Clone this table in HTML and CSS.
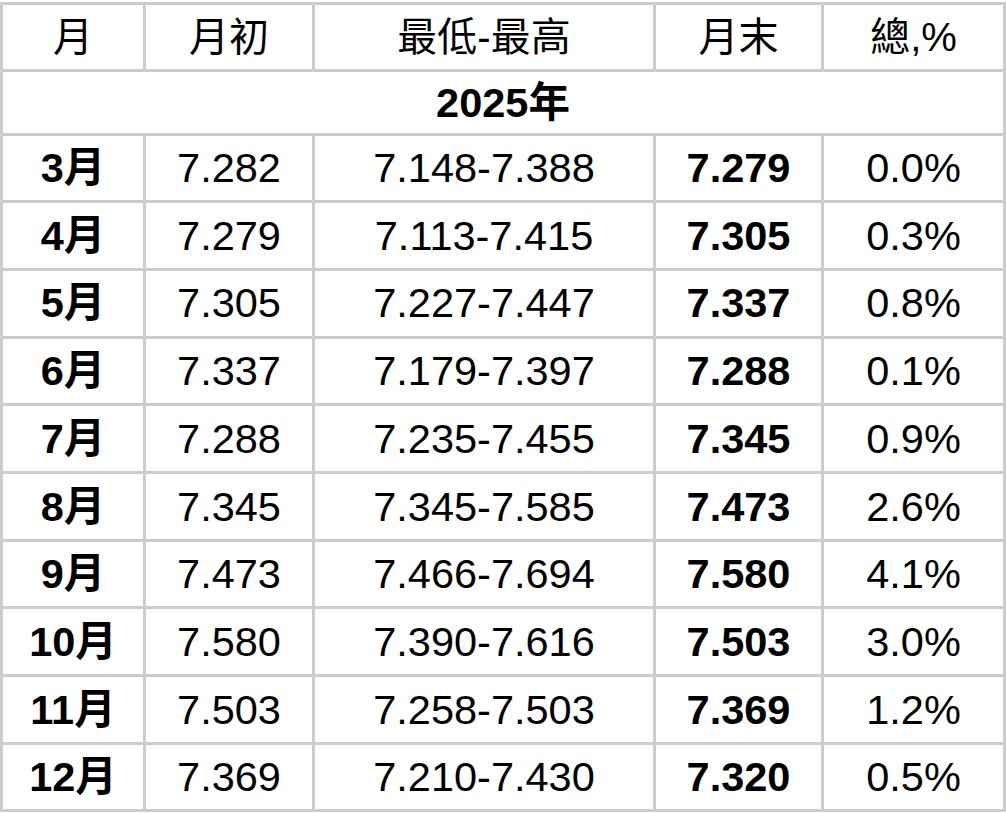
FILE: index.html
```html
<!DOCTYPE html>
<html lang="zh-Hant">
<head>
<meta charset="utf-8">
<title>2025年</title>
<link rel="stylesheet" href="styles.css">
</head>
<body>
<table class="rates">
  <colgroup>
    <col class="c-month">
    <col class="c-open">
    <col class="c-range">
    <col class="c-close">
    <col class="c-total">
  </colgroup>
  <thead>
    <tr class="head-row">
      <th>月</th><th>月初</th><th>最低-最高</th><th>月末</th><th>總,%</th>
    </tr>
  </thead>
  <tbody>
    <tr class="year-row"><td colspan="5" class="year">2025年</td></tr>
    <tr class="row"><td class="b">3月</td><td>7.282</td><td>7.148-7.388</td><td class="b">7.279</td><td>0.0%</td></tr>
    <tr class="row"><td class="b">4月</td><td>7.279</td><td>7.113-7.415</td><td class="b">7.305</td><td>0.3%</td></tr>
    <tr class="row"><td class="b">5月</td><td>7.305</td><td>7.227-7.447</td><td class="b">7.337</td><td>0.8%</td></tr>
    <tr class="row"><td class="b">6月</td><td>7.337</td><td>7.179-7.397</td><td class="b">7.288</td><td>0.1%</td></tr>
    <tr class="row"><td class="b">7月</td><td>7.288</td><td>7.235-7.455</td><td class="b">7.345</td><td>0.9%</td></tr>
    <tr class="row"><td class="b">8月</td><td>7.345</td><td>7.345-7.585</td><td class="b">7.473</td><td>2.6%</td></tr>
    <tr class="row"><td class="b">9月</td><td>7.473</td><td>7.466-7.694</td><td class="b">7.580</td><td>4.1%</td></tr>
    <tr class="row"><td class="b">10月</td><td>7.580</td><td>7.390-7.616</td><td class="b">7.503</td><td>3.0%</td></tr>
    <tr class="row"><td class="b">11月</td><td>7.503</td><td>7.258-7.503</td><td class="b">7.369</td><td>1.2%</td></tr>
    <tr class="row"><td class="b">12月</td><td>7.369</td><td>7.210-7.430</td><td class="b">7.320</td><td>0.5%</td></tr>
  </tbody>
</table>
</body>
</html>
```

FILE: styles.css
```css
html, body {
  margin: 0;
  padding: 0;
  background: #ffffff;
}

body {
  padding-top: 2px;
  font-family: "Liberation Sans", Arial, "Noto Sans CJK TC", sans-serif;
  color: #000000;
}

.rates {
  width: 1006px;
  table-layout: fixed;
  border-collapse: separate;
  border-spacing: 3px;
  background: #cccccc;
  margin: 0;
}

.c-month { width: 140px; }
.c-open { width: 166px; }
.c-range { width: 338px; }
.c-close { width: 165px; }
.c-total { width: 179px; }

.rates th,
.rates td {
  background: #ffffff;
  padding: 0;
  text-align: center;
  vertical-align: middle;
  font-size: 41.5px;
  line-height: 1;
  font-weight: 400;
  white-space: nowrap;
}

.rates th {
  font-size: 40px;
}

.head-row th { height: 64px; }
.year-row td { height: 60.5px; }
.row td { height: 64.7px; }

.rates .b,
.rates .year {
  font-weight: 700;
}
```
